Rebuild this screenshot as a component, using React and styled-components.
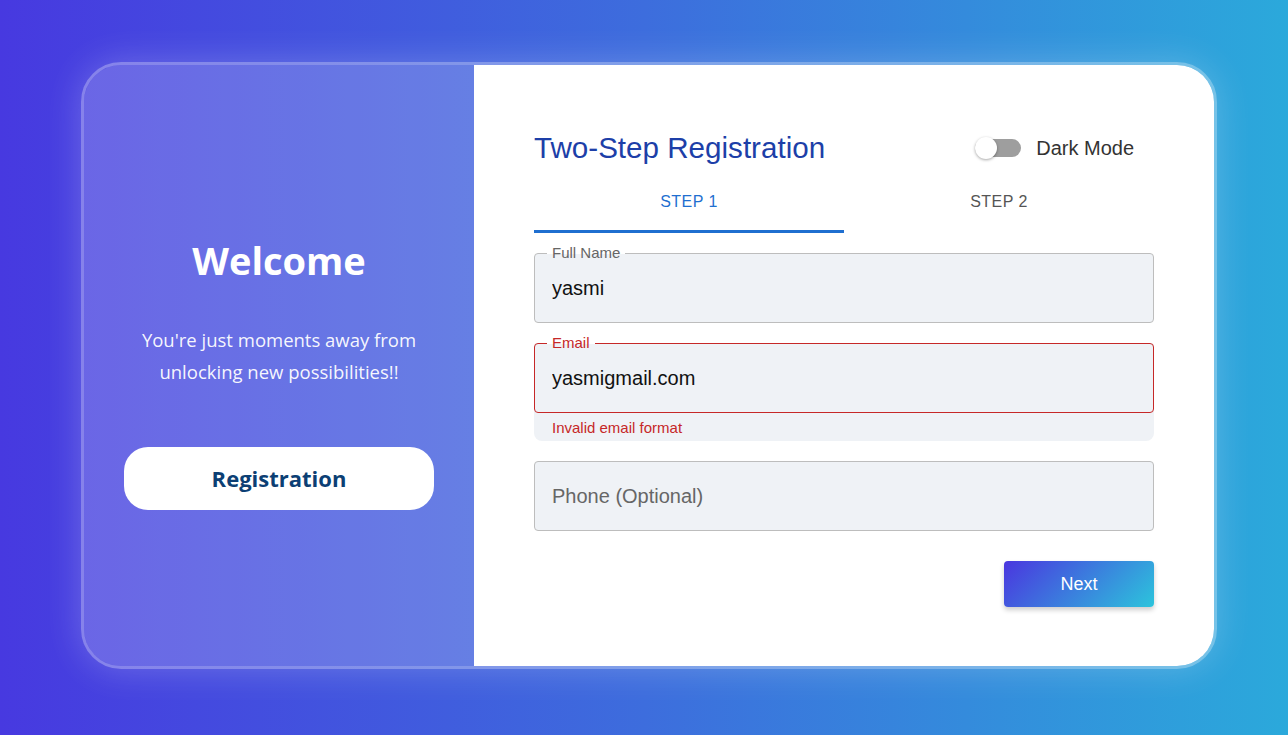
import React, { useState } from 'react';
import styled, { createGlobalStyle } from 'styled-components';

const GlobalStyle = createGlobalStyle`
  html, body {
    margin: 0;
    padding: 0;
    height: 100%;
  }
  body {
    font-family: "Liberation Sans", Arial, sans-serif;
    background: linear-gradient(90deg, #4739e0 0%, #3d6ddd 50%, #2ba9db 100%);
    overflow: hidden;
  }
`;

const Page = styled.div`
  width: 1288px;
  height: 735px;
  padding: 62px 0 0 81px;
  box-sizing: border-box;
`;

// outer card with translucent border and soft glow
const Card = styled.div`
  width: 1136px;
  height: 607px;
  box-sizing: border-box;
  display: flex;
  border: 3px solid rgba(255, 255, 255, 0.35);
  border-radius: 40px;
  overflow: hidden;
  box-shadow: 0 0 36px rgba(255, 255, 255, 0.22);
`;

const Aside = styled.div`
  width: 390px;
  flex-shrink: 0;
  background: rgba(255, 255, 255, 0.2);
  display: flex;
  flex-direction: column;
  align-items: center;
  justify-content: center;
  padding-top: 14px;
  box-sizing: border-box;
  font-family: "Open Sans", "Noto Sans", sans-serif;
  color: #fff;
`;

const Welcome = styled.h1`
  margin: 0;
  font-size: 38px;
  font-weight: 700;
  line-height: 48px;
`;

const Tagline = styled.p`
  margin: 40px 0 0;
  font-size: 18.5px;
  line-height: 32px;
  text-align: center;
  color: rgba(255, 255, 255, 0.95);
`;

const RegisterButton = styled.button`
  margin-top: 59px;
  width: 310px;
  height: 63px;
  border: none;
  border-radius: 24px;
  background: #fff;
  color: #0c3f74;
  font-family: "Open Sans", "Noto Sans", sans-serif;
  font-size: 22px;
  font-weight: 700;
  cursor: pointer;
`;

const Main = styled.div`
  flex: 1;
  background: #fff;
  display: flex;
  flex-direction: column;
  padding: 63px 60px 0;
`;

const Header = styled.div`
  display: flex;
  align-items: center;
  justify-content: space-between;
  height: 40px;
`;

const Title = styled.h2`
  margin: 0;
  font-size: 29.6px;
  font-weight: 400;
  color: #1d3fa8;
`;

const ToggleLabel = styled.label`
  display: flex;
  align-items: center;
  gap: 15px;
  padding-right: 20px;
  font-size: 20px;
  color: #333;
  cursor: pointer;
`;

const Track = styled.span`
  position: relative;
  width: 46px;
  height: 18px;
  border-radius: 9px;
  background: ${({ on }) => (on ? '#90caf9' : '#9e9e9e')};
`;

const Thumb = styled.span`
  position: absolute;
  top: -2px;
  left: ${({ on }) => (on ? '24px' : '0')};
  width: 22px;
  height: 22px;
  border-radius: 50%;
  background: ${({ on }) => (on ? '#1976d2' : '#fff')};
  box-shadow: 0 1px 3px rgba(0, 0, 0, 0.35);
`;

const Tabs = styled.div`
  display: flex;
`;

const Tab = styled.button`
  flex: 1;
  height: 65px;
  padding: 6px 0 0;
  border: none;
  border-bottom: 3px solid ${({ active }) => (active ? '#1f6fd0' : 'transparent')};
  background: none;
  font-family: "Liberation Sans", Arial, sans-serif;
  font-size: 16px;
  letter-spacing: 0.45px;
  color: ${({ active }) => (active ? '#1f6fd0' : '#555')};
  cursor: pointer;
`;

const Form = styled.div`
  display: flex;
  flex-direction: column;
  gap: 20px;
  margin-top: 20px;
`;

const FieldGroup = styled.div`
  background: ${({ error }) => (error ? '#eff2f6' : 'transparent')};
  border-radius: 4px 4px 8px 8px;
`;

const FieldBox = styled.div`
  position: relative;
  height: 70px;
  box-sizing: border-box;
  border: 1px solid ${({ error }) => (error ? '#c62828' : '#bdbdbd')};
  border-radius: 4px;
  background: #eff2f6;
  display: flex;
  align-items: center;
  padding: 0 17px;
`;

const FloatLabel = styled.span`
  position: absolute;
  top: -10px;
  left: 12px;
  padding: 0 5px;
  font-size: 15px;
  line-height: 18px;
  color: ${({ error }) => (error ? '#c62828' : '#666')};
  background: linear-gradient(#fff 55%, #eff2f6 55%);
`;

const Input = styled.input`
  width: 100%;
  border: none;
  outline: none;
  background: transparent;
  font-family: "Liberation Sans", Arial, sans-serif;
  font-size: 20px;
  color: #111;
  padding: 0;

  &::placeholder {
    color: #666;
  }
`;

const Helper = styled.div`
  padding: 7px 18px 5px;
  font-size: 15px;
  line-height: 16px;
  color: #c62828;
`;

const Actions = styled.div`
  display: flex;
  justify-content: flex-end;
  margin-top: 10px;
`;

const NextButton = styled.button`
  width: 150px;
  height: 46px;
  border: none;
  border-radius: 4px;
  background: linear-gradient(135deg, #4a36df 0%, #2cc4dc 100%);
  color: #fff;
  font-family: "Liberation Sans", Arial, sans-serif;
  font-size: 18px;
  box-shadow: 0 3px 5px rgba(0, 0, 0, 0.2);
  cursor: pointer;
`;

const Field = ({ label, value, placeholder, error, helper }) => (
  <FieldGroup error={error}>
    <FieldBox error={error}>
      {label && <FloatLabel error={error}>{label}</FloatLabel>}
      <Input defaultValue={value} placeholder={placeholder} />
    </FieldBox>
    {helper && <Helper>{helper}</Helper>}
  </FieldGroup>
);

const App = () => {
  const [dark, setDark] = useState(false);
  const [step, setStep] = useState(1);

  return (
    <>
      <GlobalStyle />
      <Page>
        <Card>
          <Aside>
            <Welcome>Welcome</Welcome>
            <Tagline>
              You're just moments away from
              <br />
              unlocking new possibilities!!
            </Tagline>
            <RegisterButton>Registration</RegisterButton>
          </Aside>

          <Main>
            <Header>
              <Title>Two-Step Registration</Title>
              <ToggleLabel onClick={() => setDark(!dark)}>
                <Track on={dark}>
                  <Thumb on={dark} />
                </Track>
                Dark Mode
              </ToggleLabel>
            </Header>

            <Tabs>
              <Tab active={step === 1} onClick={() => setStep(1)}>STEP 1</Tab>
              <Tab active={step === 2} onClick={() => setStep(2)}>STEP 2</Tab>
            </Tabs>

            <Form>
              <Field label="Full Name" value="yasmi" />
              <Field label="Email" value="yasmigmail.com" error helper="Invalid email format" />
              <Field placeholder="Phone (Optional)" />
              <Actions>
                <NextButton>Next</NextButton>
              </Actions>
            </Form>
          </Main>
        </Card>
      </Page>
    </>
  );
};

export default App;
